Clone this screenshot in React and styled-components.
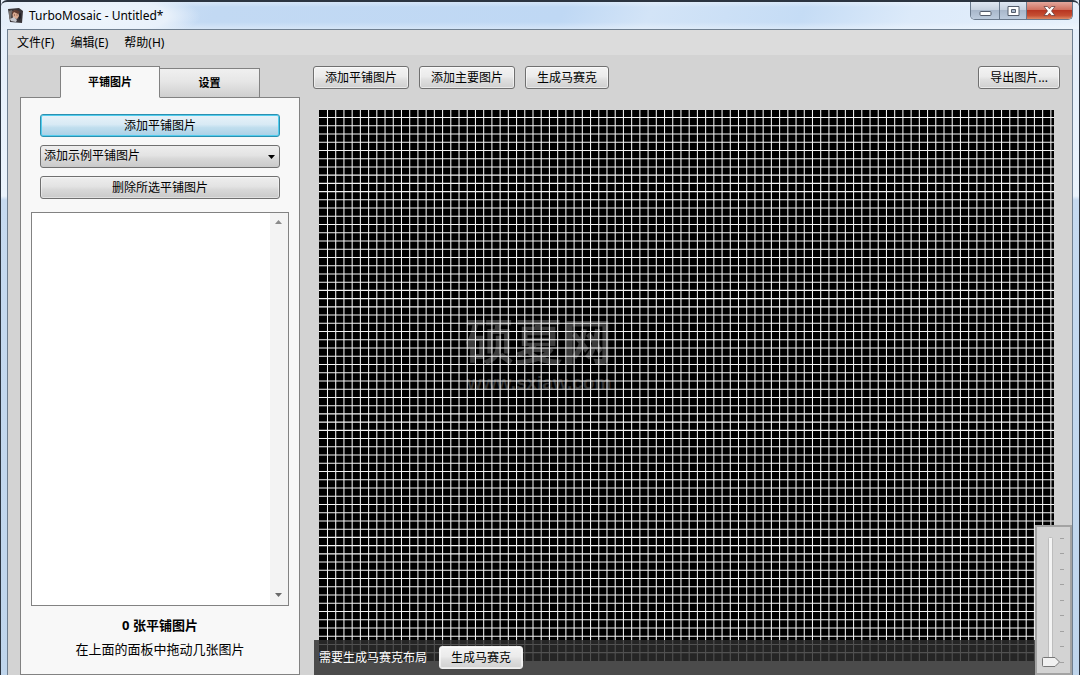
import React, { useState } from "react";
import styled, { createGlobalStyle } from "styled-components";

const GlobalStyle = createGlobalStyle`
  *, *::before, *::after { box-sizing: border-box; }
  body {
    margin: 0;
    background: #d3d3d3;
    color: #000;
    font: 12px/16px "Noto Sans", "Noto Sans CJK SC", sans-serif;
  }
  button, select, input { font: inherit; color: inherit; margin: 0; }
`;

const WindowFrame = styled.div`
  min-height: 100vh;
  display: flex;
  flex-direction: column;
  padding: 0 6px;
  border-left: 1px solid #2b3440;
  border-right: 1px solid #2b3440;
  background: linear-gradient(180deg, #e4eefa 0, #eaf3fc 196px, #c6daf0 200px, #bfd5ec 100%);
`;

const TitleBar = styled.header`
  height: 29px;
  margin: 0 -6px;
  padding: 0 6px 0 7px;
  display: flex;
  justify-content: space-between;
  border-top: 2px solid #2b3440;
  border-radius: 6px 6px 0 0;
  background:
    radial-gradient(ellipse 110px 26px at 90px 14px, #eef5fc 0, #eaf2fbee 70%, #eaf2fb00 100%),
    linear-gradient(180deg, #ffffff55 0, #ffffff00 5px, #ffffff00 20px, #ffffff55 100%),
    linear-gradient(115deg, #dce9f8 0, #c2d9f3 20%, #bfd8f4 52%, #d3e4f7 60%, #c5dcf5 74%, #dceafa 84%, #e6f0fb 100%);
`;

const TitleGroup = styled.div`
  display: flex;
  align-items: center;
  gap: 6px;
`;

const TitleText = styled.h1`
  margin: 0;
  font-size: 12px;
  font-weight: 400;
`;

const CaptionButtons = styled.div`
  display: flex;
  height: 18px;
  border: 1px solid #69798c;
  border-top: 0;
  border-radius: 0 0 5px 5px;
  overflow: hidden;
`;

const CaptionButton = styled.button`
  width: ${(p) => p.$width}px;
  padding: 0;
  border: 0;
  border-left: ${(p) => (p.$first ? "0" : "1px solid #69798c")};
  display: grid;
  place-items: center;
  background: ${(p) =>
    p.$danger
      ? "linear-gradient(180deg, #e3a79d 0, #d0705f 45%, #b83622 50%, #c64f33 80%, #dd8a66 100%)"
      : "linear-gradient(180deg, #dfe7f2 0, #c6d1df 45%, #a9b8cb 50%, #bccbdd 100%)"};
`;

const Client = styled.div`
  flex: 1;
  display: flex;
  flex-direction: column;
  border: solid #6f7f90;
  border-width: 1px 1px 0;
  background: #d3d3d3;
`;

const MenuBar = styled.nav`
  display: flex;
  gap: 16px;
  height: 25px;
  padding: 0 9px;
  background: #dcdcdc;
`;

const MenuItem = styled.button`
  padding: 0;
  border: 0;
  background: none;
`;

const Workspace = styled.main`
  flex: 1;
  display: flex;
  gap: 13px;
  padding: 11px 0 0 12px;
`;

const Sidebar = styled.aside`
  width: 280px;
  flex: none;
  display: flex;
  flex-direction: column;
`;

const Tabs = styled.div`
  display: flex;
  align-items: flex-end;
  height: 32px;
  margin: 0 0 -1px 40px;
`;

const Tab = styled.button`
  position: relative;
  width: 100px;
  height: ${(p) => (p.$active ? 32 : 30)}px;
  padding: 0;
  border: 1px solid #828282;
  border-left-width: ${(p) => (p.$active ? 1 : 0)}px;
  border-bottom-color: ${(p) => (p.$active ? "#f8f8f8" : "#828282")};
  background: ${(p) => (p.$active ? "#f8f8f8" : "linear-gradient(180deg, #f0f0f0, #e6e6e6 45%, #cfcfcf)")};
  font-size: 11px;
  font-weight: 700;
`;

const Panel = styled.section`
  flex: 1;
  display: flex;
  flex-direction: column;
  padding: 16px 10px 17px;
  border: 1px solid #828282;
  background: #f8f8f8;
`;

const PanelActions = styled.div`
  display: flex;
  flex-direction: column;
  gap: 8px;
  padding: 0 9px;
  margin-bottom: 13px;
`;

const Button = styled.button`
  height: 23px;
  padding: 0 11px;
  border: 1px solid #707070;
  border-radius: 3px;
  white-space: nowrap;
  line-height: 20px;
  background: linear-gradient(180deg, #f3f3f3 0, #ebebeb 45%, #dfdfdf 60%, #d0d0d0 100%);
  box-shadow: inset 0 0 0 1px #ffffff88;
`;

const WideButton = styled(Button)`
  width: 100%;
  border-color: ${(p) => (p.$focused ? "#2c90b0" : "#707070")};
  background: ${(p) =>
    p.$focused
      ? "linear-gradient(180deg, #e8f2f8 0, #d8eaf5 45%, #c0deee 60%, #a9d0e6 100%)"
      : "linear-gradient(180deg, #eeeeee 0, #e3e3e3 45%, #d8d8d8 60%, #cacaca 100%)"};
  box-shadow: inset 0 0 0 1px ${(p) => (p.$focused ? "#52cdee" : "#ffffff66")};
`;

const SelectWrap = styled.label`
  display: grid;
  align-items: center;
  > * { grid-area: 1 / 1; }
  > svg { justify-self: end; margin-right: 5px; pointer-events: none; }
`;

const SampleSelect = styled.select`
  appearance: none;
  width: 100%;
  height: 23px;
  padding: 0 20px 1px 3px;
  border: 1px solid #707070;
  border-radius: 3px;
  background: linear-gradient(180deg, #eeeeee 0, #e3e3e3 45%, #d8d8d8 60%, #cacaca 100%);
`;

const TileList = styled.div`
  flex: 1;
  display: flex;
  justify-content: flex-end;
  border: 1px solid #828282;
  background: #fff;
`;

const ScrollTrack = styled.div`
  width: 18px;
  display: flex;
  flex-direction: column;
  justify-content: space-between;
  align-items: center;
  padding: 7px 2px 8px 0;
  background: #f3f3f3;
`;

const TileCount = styled.p`
  margin: 9px 0 6px;
  text-align: center;
  font-size: 13px;
  line-height: 20px;
  font-weight: ${(p) => (p.$strong ? 700 : 400)};
`;

const TileHint = styled(TileCount)`
  margin: 0;
  line-height: 16px;
`;

const Editor = styled.section`
  flex: 1;
  min-width: 0;
  display: flex;
  flex-direction: column;
  gap: 21px;
`;

const Toolbar = styled.div`
  display: flex;
  gap: 10px;
  padding-right: 12px;
  > :last-child { margin-left: auto; }
`;

const Stage = styled.div`
  position: relative;
  flex: 1;
  min-height: 400px;
  padding: 0 18px 14px 6px;
`;

const MosaicSvg = styled.svg`
  display: block;
  width: 100%;
  height: 551px;
  background: #000;
`;

const StatusBar = styled.div`
  position: absolute;
  inset: auto 0 0 1px;
  height: 35px;
  padding-left: 5px;
  display: flex;
  align-items: center;
  gap: 12px;
  color: #fff;
  background: rgba(45, 45, 45, 0.82);
`;

const StatusButton = styled(Button)`
  color: #000;
  border-color: #f0f0f0;
`;

const ZoomPanel = styled.div`
  position: absolute;
  right: 0;
  bottom: 0;
  width: 37px;
  height: 150px;
  display: grid;
  border: 2px solid #a3a3a3;
  background: #d3d3d3;
  > * { grid-area: 1 / 1; }
`;

const ZoomInput = styled.input`
  writing-mode: vertical-lr;
  direction: rtl;
  width: 100%;
  height: 100%;
  opacity: 0;
`;

const PITCH_X = 8.22;
const PITCH_Y = 8.233;

function MosaicGrid() {
  const columns = Array.from({ length: 400 }, (_, i) => `M${(8.5 + i * PITCH_X).toFixed(2)} 0V551`).join("");
  const rows = Array.from({ length: 66 }, (_, i) => `M0 ${(7.5 + i * PITCH_Y).toFixed(2)}H3300`).join("");
  return (
    <MosaicSvg role="img" aria-label="马赛克布局">
      <g fill="#3c3c3c" fontWeight="700">
        <text x="146" y="250" fontSize="49" fontFamily="Noto Sans CJK SC, sans-serif">硕夏网</text>
        <text x="148" y="279" fontSize="19" fill="#333" fontFamily="Liberation Sans, sans-serif">www.sxiaw.com</text>
      </g>
      <path d={columns + rows} stroke="#f4f4f4" strokeWidth="1.05" fill="none" />
    </MosaicSvg>
  );
}

function AppIcon() {
  return (
    <svg width="15" height="15" viewBox="0 0 15 15" aria-hidden="true">
      <path d="M0 1 11 0 15 3 14 15 2 14Z" fill="#39363a" />
      <path d="M1 3 4 2 3 12 1 10Z" fill="#77716f" />
      <path d="M4 4Q7 1 10 4L11 8 9 11 5 10Z" fill="#d9aa91" />
      <path d="M4 4Q7 0 12 4L10 6 6 4 4 7Z" fill="#5c3b31" />
      <path d="M2 11 6 9 9 12 8 14 3 13Z" fill="#c5c6cc" />
      <path d="M11 6 13 5 13 10 11 12Z" fill="#232126" />
      <path d="M6 7h1M8.5 7h1" stroke="#6b4033" strokeWidth="1" />
    </svg>
  );
}

function Triangle({ up, size = 7, color = "#000" }) {
  return (
    <svg width={size} height="4" viewBox="0 0 8 4" preserveAspectRatio="none" aria-hidden="true">
      <path d={up ? "M0 4 4 0 8 4Z" : "M0 0 4 4 8 0Z"} fill={color} />
    </svg>
  );
}

function ZoomSlider() {
  const [zoom, setZoom] = useState(0);
  const thumbY = 135 - zoom * 1.24;
  return (
    <ZoomPanel>
      <svg width="33" height="146" viewBox="0 0 33 146" aria-hidden="true">
        <rect x="11.5" y="10.5" width="4" height="128" rx="1" fill="#f4f4f4" stroke="#bdbdbd" />
        {[11, 26, 42, 57, 73, 88, 104, 119, 135].map((y) => (
          <path key={y} d={`M23 ${y + 0.5}h4`} stroke="#a2a2a2" />
        ))}
        <path
          transform={`translate(0 ${thumbY})`}
          d="M6.500-4.500H18L22.500 0 18 4.500H6.500Q5.500 4.500 5.500 3.500V-3.500Q5.500-4.500 6.500-4.500Z"
          fill="#f1f1f1"
          stroke="#777"
        />
      </svg>
      <ZoomInput
        type="range"
        min="0"
        max="100"
        value={zoom}
        aria-label="缩放"
        onChange={(e) => setZoom(Number(e.target.value))}
      />
    </ZoomPanel>
  );
}

export default function App() {
  const [tab, setTab] = useState("tiles");
  return (
    <>
      <GlobalStyle />
      <WindowFrame>
        <TitleBar>
          <TitleGroup>
            <AppIcon />
            <TitleText>TurboMosaic - Untitled*</TitleText>
          </TitleGroup>
          <CaptionButtons>
            <CaptionButton $first $width={28} aria-label="最小化">
              <svg width="13" height="12" viewBox="0 0 13 12">
                <rect x="1" y="6.500" width="11" height="4" rx="1" fill="#fff" stroke="#535c6b" />
              </svg>
            </CaptionButton>
            <CaptionButton $width={27} aria-label="最大化">
              <svg width="13" height="12" viewBox="0 0 13 12">
                <path d="M1 1.500H12V10.500H1ZM4.500 4.500V7.500H8.500V4.500Z" fill="#fff" fillRule="evenodd" stroke="#535c6b" />
              </svg>
            </CaptionButton>
            <CaptionButton $danger $width={46} aria-label="关闭">
              <svg width="13" height="12" viewBox="0 0 13 12">
                <path
                  d="M1 1.500H4.500L6.500 3.800 8.500 1.500H12L8.500 6 12 10.500H8.500L6.500 8.200 4.500 10.500H1L4.500 6Z"
                  fill="#fff"
                  stroke="#6a4242"
                  strokeWidth=".8"
                />
              </svg>
            </CaptionButton>
          </CaptionButtons>
        </TitleBar>

        <Client>
          <MenuBar>
            <MenuItem>文件(F)</MenuItem>
            <MenuItem>编辑(E)</MenuItem>
            <MenuItem>帮助(H)</MenuItem>
          </MenuBar>

          <Workspace>
            <Sidebar>
              <Tabs role="tablist">
                <Tab role="tab" aria-selected={tab === "tiles"} $active={tab === "tiles"} onClick={() => setTab("tiles")}>
                  平铺图片
                </Tab>
                <Tab role="tab" aria-selected={tab === "settings"} $active={tab === "settings"} onClick={() => setTab("settings")}>
                  设置
                </Tab>
              </Tabs>
              <Panel>
                <PanelActions>
                  <WideButton $focused>添加平铺图片</WideButton>
                  <SelectWrap>
                    <SampleSelect aria-label="添加示例平铺图片">
                      <option>添加示例平铺图片</option>
                    </SampleSelect>
                    <Triangle />
                  </SelectWrap>
                  <WideButton>删除所选平铺图片</WideButton>
                </PanelActions>
                <TileList>
                  <ScrollTrack>
                    <Triangle up color="#8a8a8a" />
                    <Triangle color="#6a6a6a" />
                  </ScrollTrack>
                </TileList>
                <TileCount $strong>0 张平铺图片</TileCount>
                <TileHint>在上面的面板中拖动几张图片</TileHint>
              </Panel>
            </Sidebar>

            <Editor>
              <Toolbar>
                <Button>添加平铺图片</Button>
                <Button>添加主要图片</Button>
                <Button>生成马赛克</Button>
                <Button>导出图片...</Button>
              </Toolbar>
              <Stage>
                <MosaicGrid />
                <StatusBar>
                  需要生成马赛克布局
                  <StatusButton>生成马赛克</StatusButton>
                </StatusBar>
                <ZoomSlider />
              </Stage>
            </Editor>
          </Workspace>
        </Client>
      </WindowFrame>
    </>
  );
}
